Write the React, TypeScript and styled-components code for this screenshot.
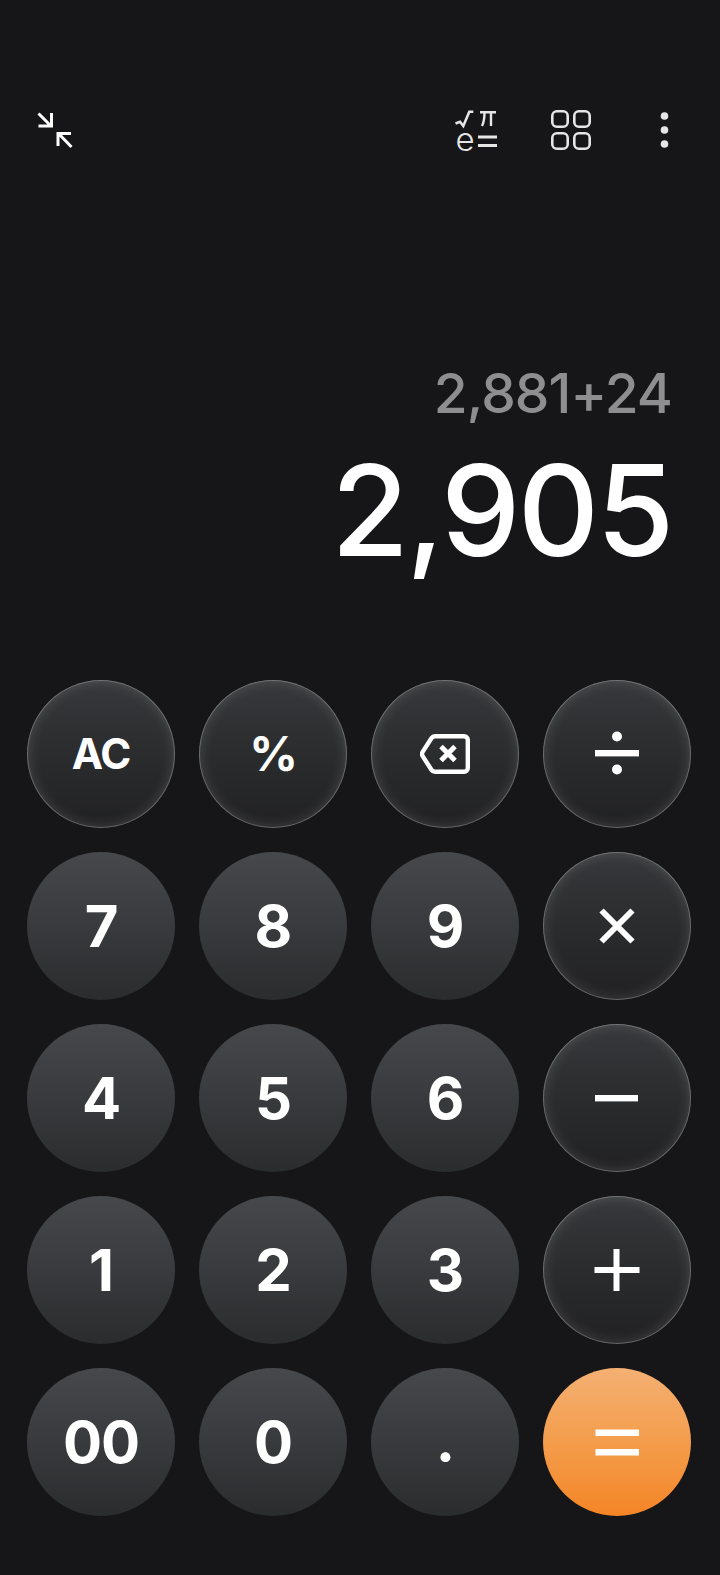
import styled, { createGlobalStyle } from 'styled-components';

const GlobalStyle = createGlobalStyle`
  html, body {
    margin: 0;
    padding: 0;
    background-color: #161618;
  }
`;

const Screen = styled.div`
  display: flex;
  flex-direction: column;
  width: 720px;
  height: 1575px;
  box-sizing: border-box;
  background-color: #161618;
  color: white;
  font-family: Inter, 'Noto Sans', sans-serif;
  overflow: hidden;
`;

const Toolbar = styled.div`
  display: flex;
  align-items: center;
  height: 60px;
  margin-top: 100px;
  padding: 0 49px 0 37px;
`;

const ToolIcon = styled.svg<{ $gap?: number }>`
  display: block;
  flex: none;
  overflow: visible;
  margin-left: ${({ $gap }) => $gap ?? 0}px;
`;

const Display = styled.div`
  display: flex;
  flex-direction: column;
  align-items: flex-end;
  padding: 205px 48px 0 0;
`;

const Expression = styled.div`
  font-size: 55px;
  line-height: 56px;
  font-weight: 450;
  color: #8e8e90;
  letter-spacing: -0.9px;
`;

const Result = styled.div`
  margin-top: 26px;
  font-size: 126px;
  line-height: 126px;
  font-weight: 500;
  letter-spacing: -2.5px;
`;

const Keypad = styled.div`
  display: grid;
  grid-template-columns: repeat(4, 148px);
  grid-auto-rows: 148px;
  gap: 24px;
  margin-top: auto;
  padding: 0 0 59px 27px;
`;

const Key = styled.button<{ $kind: 'number' | 'action' | 'equals' }>`
  display: flex;
  align-items: center;
  justify-content: center;
  width: 148px;
  height: 148px;
  padding: 0;
  border: none;
  border-radius: 50%;
  color: white;
  font-family: inherit;
  font-weight: 700;
  font-size: 58px;
  line-height: 1;
  letter-spacing: -1px;
  background: ${({ $kind }) =>
    $kind === 'number'
      ? 'linear-gradient(180deg, #47484c 0%, #2b2c2e 100%)'
      : $kind === 'equals'
        ? 'linear-gradient(180deg, #f4b073 0%, #f49f50 45%, #f48526 100%)'
        : 'linear-gradient(180deg, #37383b 0%, #2b2c2e 50%, #212123 100%)'};
  box-shadow: ${({ $kind }) =>
    $kind === 'action'
      ? 'inset 0 0 0 1px rgba(255, 255, 255, 0.24), inset 0 0 14px rgba(255, 255, 255, 0.17)'
      : 'none'};
`;

const SmallLabel = styled.span<{ $size: number }>`
  font-size: ${({ $size }) => $size}px;
`;

const Dot = styled.span`
  transform: translateY(-2px);
`;

const CompressIcon = () => (
  <ToolIcon width="37" height="37" viewBox="0 0 37 37" fill="none" stroke="white" strokeWidth="3">
    <path d="M1.5 1.5 14.5 14.5M1.5 14 14.5 14 14.5 1" />
    <path d="M21.5 21.5 34.5 35M21 34V21.5H34" />
  </ToolIcon>
);

const ScientificIcon = () => (
  <ToolIcon $gap={381} width="44" height="44" viewBox="0 -1 44 44" fill="none" stroke="#e6e6e6">
    <path d="M0.5 14.5 5 12.7 8.3 17 14.3 2.7H18.3" strokeWidth="2.6" />
    <path d="M25 3.2H41M29.5 3.2C29.5 9 29 13 27 17M36 3.2V17" strokeWidth="2.4" />
    <text x="0.5" y="41.5" fontFamily="Inter, sans-serif" fontSize="33" fontWeight="350" fill="#e6e6e6" stroke="none">
      e
    </text>
    <path d="M23 28H42M23 36.5H42" strokeWidth="2.8" />
  </ToolIcon>
);

const GridIcon = () => (
  <ToolIcon $gap={52} width="40" height="40" viewBox="0 0 40 40" fill="none" stroke="#e6e6e6" strokeWidth="2.6">
    <rect x="1.3" y="1.3" width="15.4" height="15.4" rx="4.5" />
    <rect x="23.3" y="1.3" width="15.4" height="15.4" rx="4.5" />
    <rect x="1.3" y="23.3" width="15.4" height="15.4" rx="4.5" />
    <rect x="23.3" y="23.3" width="15.4" height="15.4" rx="4.5" />
  </ToolIcon>
);

const MoreIcon = () => (
  <ToolIcon $gap={69} width="9" height="38" viewBox="0 0 9 38" fill="#e6e6e6">
    <circle cx="4.5" cy="5" r="3.8" />
    <circle cx="4.5" cy="19" r="3.8" />
    <circle cx="4.5" cy="33" r="3.8" />
  </ToolIcon>
);

const BackspaceIcon = () => (
  <svg width="50" height="40" viewBox="0 0 50 40" fill="none" stroke="white" strokeWidth="4.4">
    <path d="M15 2.2H44C46.2 2.2 47.8 3.8 47.8 6V34C47.8 36.2 46.2 37.8 44 37.8H15C13.6 37.8 12.4 37.2 11.6 36L2.8 22.4C1.8 20.9 1.8 19.1 2.8 17.6L11.6 4C12.4 2.8 13.6 2.2 15 2.2Z" strokeLinejoin="round" />
    <path d="M21 12.5 35 26.5M35 12.5 21 26.5" strokeWidth="5" />
  </svg>
);

const OperatorIcon = ({ children }: { children: React.ReactNode }) => (
  <svg width="60" height="60" viewBox="0 0 60 60" fill="white" stroke="none">
    {children}
  </svg>
);

const keys = [
  { id: 'ac', kind: 'action', content: <SmallLabel $size={42}>AC</SmallLabel> },
  { id: 'percent', kind: 'action', content: <SmallLabel $size={48}>%</SmallLabel> },
  { id: 'back', kind: 'action', content: <BackspaceIcon /> },
  {
    id: 'divide',
    kind: 'action',
    content: (
      <OperatorIcon>
        <rect x="8" y="26" width="44" height="6.4" />
        <circle cx="30" cy="12.5" r="5" />
        <circle cx="30" cy="45.5" r="5" />
      </OperatorIcon>
    ),
  },
  { id: '7', kind: 'number', content: '7' },
  { id: '8', kind: 'number', content: '8' },
  { id: '9', kind: 'number', content: '9' },
  {
    id: 'times',
    kind: 'action',
    content: (
      <OperatorIcon>
        <path d="M14.5 14.5 45.5 45.5M45.5 14.5 14.5 45.5" stroke="white" strokeWidth="6" />
      </OperatorIcon>
    ),
  },
  { id: '4', kind: 'number', content: '4' },
  { id: '5', kind: 'number', content: '5' },
  { id: '6', kind: 'number', content: '6' },
  {
    id: 'minus',
    kind: 'action',
    content: (
      <OperatorIcon>
        <rect x="8" y="27" width="43" height="6.4" />
      </OperatorIcon>
    ),
  },
  { id: '1', kind: 'number', content: '1' },
  { id: '2', kind: 'number', content: '2' },
  { id: '3', kind: 'number', content: '3' },
  {
    id: 'plus',
    kind: 'action',
    content: (
      <OperatorIcon>
        <path d="M7.5 27H52.5V33H7.5ZM26.5 9H32.5V51H26.5Z" />
      </OperatorIcon>
    ),
  },
  { id: '00', kind: 'number', content: '00' },
  { id: '0', kind: 'number', content: '0' },
  { id: 'dot', kind: 'number', content: <Dot>.</Dot> },
  {
    id: 'equals',
    kind: 'equals',
    content: (
      <OperatorIcon>
        <path d="M8.5 17.5H52V24H8.5ZM8.5 37H52V43.5H8.5Z" />
      </OperatorIcon>
    ),
  },
] as const;

const App = () => {
  return (
    <Screen>
      <GlobalStyle />
      <Toolbar>
        <CompressIcon />
        <ScientificIcon />
        <GridIcon />
        <MoreIcon />
      </Toolbar>
      <Display>
        <Expression>2,881+24</Expression>
        <Result>2,905</Result>
      </Display>
      <Keypad>
        {keys.map((key) => (
          <Key key={key.id} $kind={key.kind}>
            {key.content}
          </Key>
        ))}
      </Keypad>
    </Screen>
  );
};

export default App;
